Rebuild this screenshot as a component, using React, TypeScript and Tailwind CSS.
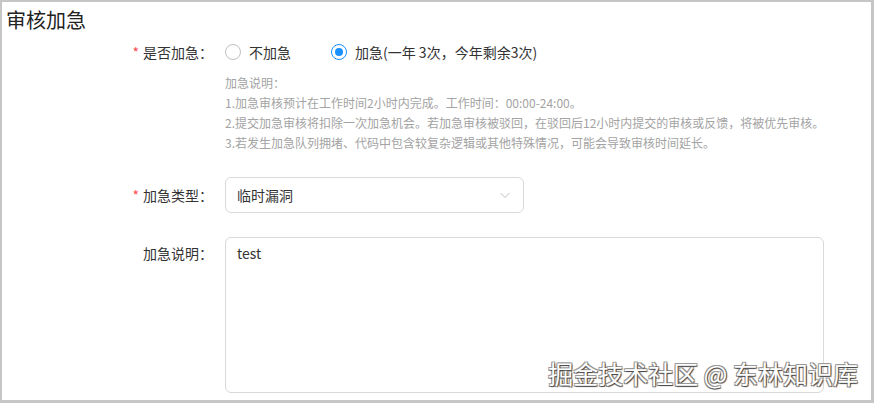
/**
 * Urgent review form section
 */

const font = "font-['Microsoft_YaHei','Noto_Sans_CJK_SC','Noto_Sans',sans-serif]";

interface RadioProps {
  label: string;
  checked?: boolean;
}

function Radio({ label, checked = false }: RadioProps) {
  return (
    <label className="flex items-center h-[22px]">
      <span
        className={`flex items-center justify-center w-4 h-4 rounded-full border bg-white ${
          checked ? 'border-[#1890ff]' : 'border-[#bfbfbf]'
        }`}
      >
        {checked && <span className="w-2 h-2 rounded-full bg-[#1890ff]" />}
      </span>
      <span className="ml-2 text-sm text-[#333]">{label}</span>
    </label>
  );
}

interface FieldProps {
  label: string;
  required?: boolean;
  labelOffset?: string;
  className?: string;
  children: React.ReactNode;
}

function Field({ label, required = false, labelOffset = '', className = '', children }: FieldProps) {
  return (
    <div className={`flex ${className}`}>
      <div className={`w-[211px] shrink-0 flex justify-end items-start ${labelOffset}`}>
        <span className="flex items-center h-[22px] text-sm text-[#333]">
          {required && <span className="text-[#ff4d4f] mr-[4px] text-sm">*</span>}
          {label}：
        </span>
      </div>
      <div className="ml-3 flex-1">{children}</div>
    </div>
  );
}

const notes = [
  '1.加急审核预计在工作时间2小时内完成。工作时间：00:00-24:00。',
  '2.提交加急审核将扣除一次加急机会。若加急审核被驳回，在驳回后12小时内提交的审核或反馈，将被优先审核。',
  '3.若发生加急队列拥堵、代码中包含较复杂逻辑或其他特殊情况，可能会导致审核时间延长。',
];

export default function App() {
  return (
    <div
      className={`relative w-[874px] h-[403px] overflow-hidden bg-white border-l-2 border-t-2 border-r-[3px] border-b-[3px] border-[#c6c6c6] ${font}`}
    >
      <h2 className="pl-[4px] pt-[4px] text-[20px] leading-[28px] text-[#222]">审核加急</h2>

      <div className="mt-[7px]">
        <Field label="是否加急" required>
          <div className="flex items-center">
            <Radio label="不加急" />
            <div className="ml-[40px]">
              <Radio label="加急(一年 3次，今年剩余3次)" checked />
            </div>
          </div>
          <div className="mt-[10px] text-xs leading-[20px] text-[#a3a3a3]">
            <div>加急说明：</div>
            {notes.map((n) => (
              <div key={n}>{n}</div>
            ))}
          </div>
        </Field>

        <Field label="加急类型" required labelOffset="pt-[7px]" className="mt-[24px]">
          <div className="w-[299px] h-[36px] flex items-center justify-between px-[11px] border border-[#d9d9d9] rounded-[6px] bg-white">
            <span className="text-sm text-[#333]">临时漏洞</span>
            <svg width="12" height="12" viewBox="0 0 12 12" fill="none" className="mr-[1px]">
              <path d="M1.5 4l4.5 4.5L10.5 4" stroke="#bfbfbf" strokeWidth="1" />
            </svg>
          </div>
        </Field>

        <Field label="加急说明" labelOffset="pt-[5px]" className="mt-[24px]">
          <div className="w-[599px] h-[156px] px-[11px] pt-[4px] border border-[#d9d9d9] rounded-[6px] bg-white">
            <div className="text-sm leading-[22px] text-[#333]">test</div>
          </div>
        </Field>
      </div>

      <div className="absolute right-[13px] bottom-[12px] text-[25px] leading-[30px] text-white [text-shadow:1px_1px_1px_#444,-1px_-1px_0_#999,1px_-1px_0_#999,-1px_1px_0_#888]">
        掘金技术社区 @ 东林知识库
      </div>
    </div>
  );
}
